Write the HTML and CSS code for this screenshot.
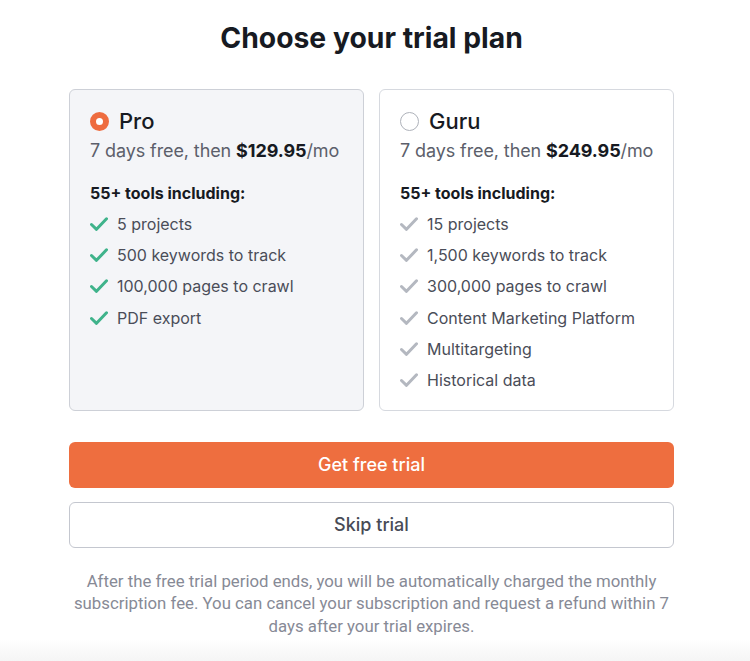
FILE: index.html
```html
<!DOCTYPE html>
<html lang="en">
<head>
    <meta charset="UTF-8">
    <meta name="viewport" content="width=device-width, initial-scale=1.0">
    <title>Choose your trial plan</title>
    <link rel="stylesheet" href="styles.css">
</head>
<body>
    <div class="container">
        <h1>Choose your trial plan</h1>
        <div class="plans">
            <label class="plan selected">
                <div class="plan-head">
                    <span class="radio"></span>
                    <span class="plan-name">Pro</span>
                </div>
                <div class="price">7 days free, then <b>$129.95</b>/mo</div>
                <div class="tools-title">55+ tools including:</div>
                <ul class="features">
                    <li><svg class="check" viewBox="0 0 18 14"><path d="M1.5 7.5l5 4.8L16.5 1.8" /></svg>5 projects</li>
                    <li><svg class="check" viewBox="0 0 18 14"><path d="M1.5 7.5l5 4.8L16.5 1.8" /></svg>500 keywords to track</li>
                    <li><svg class="check" viewBox="0 0 18 14"><path d="M1.5 7.5l5 4.8L16.5 1.8" /></svg>100,000 pages to crawl</li>
                    <li><svg class="check" viewBox="0 0 18 14"><path d="M1.5 7.5l5 4.8L16.5 1.8" /></svg>PDF export</li>
                </ul>
            </label>
            <label class="plan">
                <div class="plan-head">
                    <span class="radio"></span>
                    <span class="plan-name">Guru</span>
                </div>
                <div class="price">7 days free, then <b>$249.95</b>/mo</div>
                <div class="tools-title">55+ tools including:</div>
                <ul class="features">
                    <li><svg class="check" viewBox="0 0 18 14"><path d="M1.5 7.5l5 4.8L16.5 1.8" /></svg>15 projects</li>
                    <li><svg class="check" viewBox="0 0 18 14"><path d="M1.5 7.5l5 4.8L16.5 1.8" /></svg>1,500 keywords to track</li>
                    <li><svg class="check" viewBox="0 0 18 14"><path d="M1.5 7.5l5 4.8L16.5 1.8" /></svg>300,000 pages to crawl</li>
                    <li><svg class="check" viewBox="0 0 18 14"><path d="M1.5 7.5l5 4.8L16.5 1.8" /></svg>Content Marketing Platform</li>
                    <li><svg class="check" viewBox="0 0 18 14"><path d="M1.5 7.5l5 4.8L16.5 1.8" /></svg>Multitargeting</li>
                    <li><svg class="check" viewBox="0 0 18 14"><path d="M1.5 7.5l5 4.8L16.5 1.8" /></svg>Historical data</li>
                </ul>
            </label>
        </div>
        <button class="btn btn-primary">Get free trial</button>
        <button class="btn btn-secondary">Skip trial</button>
        <p class="note">After the free trial period ends, you will be automatically charged the monthly subscription fee. You can cancel your subscription and request a refund within 7 days after your trial expires.</p>
    </div>
</body>
</html>
```

FILE: styles.css
```css
html, body {
    margin: 0;
    padding: 0;
}
body {
    font-family: 'Inter', 'Noto Sans', sans-serif;
    min-height: 100vh;
    padding-right: 7px;
    box-sizing: border-box;
    background: linear-gradient(to bottom, #ffffff calc(100% - 22px), #f5f5f5 100%);
    color: #171a22;
}
.container {
    width: 605px;
    margin: 0 auto;
    padding-top: 20px;
}
.container h1 {
    margin: 0 0 33px;
    font-size: 28.3px;
    line-height: 36px;
    font-weight: 700;
    text-align: center;
    color: #171a22;
}
.plans {
    display: grid;
    grid-template-columns: 1fr 1fr;
    gap: 15px;
}
.plan {
    display: block;
    box-sizing: border-box;
    padding: 17px 8px 14px 20px;
    border: 1px solid #d6d9df;
    border-radius: 6px;
    background-color: #ffffff;
    cursor: pointer;
}
.plan.selected {
    background-color: #f4f5f8;
    border-color: #cdd0d7;
}
.plan-head {
    display: flex;
    align-items: center;
    height: 28px;
}
.radio {
    box-sizing: border-box;
    width: 19px;
    height: 19px;
    border-radius: 50%;
    border: 1px solid #aeb2ba;
    background: #fff;
    margin-right: 10px;
}
.selected .radio {
    border: 6.5px solid #ee6c3f;
}
.plan-name {
    font-size: 22px;
    font-weight: 500;
    color: #171a22;
}
.price {
    margin-top: 4px;
    font-size: 18px;
    line-height: 24px;
    letter-spacing: -0.1px;
    white-space: nowrap;
    color: #5c5f6b;
}
.price b {
    color: #171a22;
    font-weight: 700;
}
.tools-title {
    margin-top: 19px;
    font-size: 16px;
    line-height: 22px;
    font-weight: 700;
    color: #171a22;
}
.features {
    list-style: none;
    margin: 4px 0 0;
    padding: 0;
}
.features li {
    display: flex;
    align-items: center;
    height: 31.3px;
    font-size: 16px;
    color: #4a4d58;
}
.check {
    width: 18px;
    height: 14px;
    margin-right: 9px;
    flex-shrink: 0;
    fill: none;
    stroke: #b4b8c0;
    stroke-width: 3;
    stroke-linecap: round;
    stroke-linejoin: round;
}
.selected .check {
    stroke: #3fb38b;
}
.btn {
    display: block;
    width: 100%;
    height: 46px;
    border-radius: 6px;
    font-family: 'Inter', 'Noto Sans', sans-serif;
    font-size: 18px;
    font-weight: 500;
    cursor: pointer;
}
.btn-primary {
    margin-top: 31px;
    background-color: #ee6e3f;
    border: none;
    color: #ffffff;
}
.btn-primary:hover {
    background-color: #e05f30;
}
.btn-secondary {
    margin-top: 14px;
    background-color: #ffffff;
    border: 1px solid #c4c7cf;
    color: #484b56;
}
.note {
    margin: 22px -5px 0;
    font-family: 'Roboto', 'Liberation Sans', sans-serif;
    font-size: 16.8px;
    line-height: 22.5px;
    color: #878a96;
    text-align: center;
}
```
